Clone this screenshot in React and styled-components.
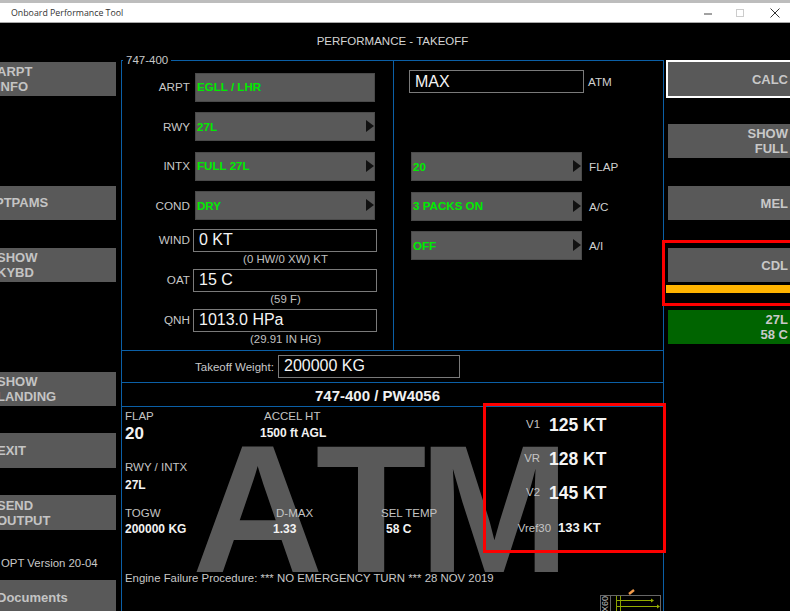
import React from "react";
import styled, { createGlobalStyle } from "styled-components";

const Global = createGlobalStyle`
  html, body { margin: 0; padding: 0; background: #000; }
  #root { width: 790px; height: 611px; overflow: hidden; }
  * { box-sizing: border-box; }
`;

const Page = styled.div`
  width: 790px; height: 611px; overflow: hidden; background: #000;
  display: flex; flex-direction: column;
  font-family: "Liberation Sans", Arial, sans-serif; color: #cfcfcf;
`;
const TitleBar = styled.div`
  height: 23px; flex: none; background: #fff;
  border-top: 3px solid #bdbdbd; border-bottom: 1px solid #a8a8a8;
  display: flex; align-items: center; justify-content: space-between;
  padding-left: 11px;
  font-family: "Open Sans", sans-serif; font-size: 8.8px; color: #333;
`;
const WinControls = styled.div`
  display: flex; align-items: center; gap: 22px; padding-right: 10px;
`;
const Body = styled.div`
  flex: 1; min-height: 0; display: flex; flex-direction: column; overflow: hidden;
`;
const Heading = styled.div`
  height: 37px; flex: none; text-align: center; font-size: 11.5px; color: #d4d4d4;
  padding: 11px 5px 0 0; line-height: 14px;
`;
const Columns = styled.div`
  flex: 1; min-height: 0; display: flex; align-items: stretch;
`;
const LeftCol = styled.div`
  width: 116px; flex: none; margin-right: 5px; display: flex; flex-direction: column;
`;
const SideBtn = styled.div`
  flex: none; height: ${p => p.$h || 34}px; margin-top: ${p => p.$mt || 0}px;
  background: #595959; color: #c4c4c4; font-weight: bold; font-size: 13px; line-height: 15px;
  display: flex; flex-direction: column; justify-content: center; white-space: nowrap;
  text-indent: ${p => p.$indent ?? -3}px; padding-bottom: ${p => p.$pb ?? 1}px;
`;
const Version = styled.div`
  margin-top: 26px; padding-left: 1px; font-size: 11.4px; line-height: 14px; color: #c8c8c8; white-space: nowrap; height: 14px;
`;
const Panel = styled.div`
  width: 543px; flex: none; height: 560px; position: relative;
  border: 1px solid #0b5fa6; border-bottom: none;
  display: flex; flex-direction: column;
`;
const Legend = styled.div`
  position: absolute; left: 1px; top: -8px; background: #000; padding: 0 3px;
  font-size: 11.5px; line-height: 14px; color: #c8c8c8;
`;
const Setup = styled.div`
  height: 290px; flex: none; display: flex; border-bottom: 1px solid #0b5fa6;
`;
const SetupLeft = styled.div`
  width: 272px; flex: none; border-right: 1px solid #0b5fa6; padding-top: 12px;
  display: flex; flex-direction: column; gap: 11.5px;
`;
const SetupRight = styled.div`
  flex: 1; padding-top: 9px; display: flex; flex-direction: column;
`;
const Row = styled.div`
  display: flex; align-items: center; height: ${p => p.$h || 28}px; flex: none;
`;
const FieldGroup = styled.div`
  flex: none; height: 40px; margin-top: ${p => p.$mt || 0}px;
`;
const RowLabel = styled.div`
  width: 68px; flex: none; text-align: right; font-size: 11.7px; color: #c8c8c8; line-height: 14px;
`;
const Select = styled.div`
  width: ${p => p.$w || 180}px; height: 29px; flex: none; background: #595959;
  border: 1px solid #4a4a4a; margin-left: ${p => p.$ml ?? 5}px;
  display: flex; align-items: center; justify-content: space-between; padding: 0 0 1px 1px;
  color: #00ec00; font-weight: bold; font-size: 11.6px;
`;
const Arrow = styled.span`
  width: 0; height: 0; border-left: 8px solid #111; border-top: 6px solid transparent;
  border-bottom: 6px solid transparent;
`;
const Input = styled.div`
  width: ${p => p.$w || 184}px; height: 23px; flex: none; background: #000;
  border: 1px solid #7a7a7a; margin-left: ${p => p.$ml ?? 3}px;
  color: #f4f4f4; font-size: 16px; line-height: ${p => p.$lh || 20}px; padding-left: 5px;
`;
const Note = styled.div`
  padding-left: 71px; width: 256px; text-align: center; font-size: 11.4px; line-height: 13px;
  color: #c0c0c0; margin-top: 1px;
`;
const RightLabel = styled.div`
  margin-left: ${p => p.$ml ?? 7}px; font-size: 11.7px; color: #cfcfcf;
`;
const InputLine = styled.div`
  display: flex; align-items: center; height: 23px; flex: none; margin: 0 0 59px 15px;
`;
const SelectLine = styled.div`
  display: flex; align-items: center; height: 29px; flex: none; margin: 0 0 10.5px 17px;
`;
const WeightRow = styled.div`
  height: 32px; flex: none; border-bottom: 1px solid #0b5fa6;
  display: flex; align-items: center; padding-left: 73px;
`;
const WeightLabel = styled.div` font-size: 11.5px; color: #c8c8c8; width: 83px; `;
const ModelBar = styled.div`
  height: 24px; flex: none; border-bottom: 1px solid #0b5fa6;
  text-align: center; font-size: 15px; font-weight: bold; color: #f0f0f0; line-height: 25px;
  padding-right: 30px; position: relative; z-index: 1;
`;
const Results = styled.div`
  flex: 1; position: relative; padding: 2px 0 0 3px; overflow: hidden;
`;
const Watermark = styled.div`
  position: absolute; left: 70px; top: -3px; font-size: 182px; line-height: 210px;
  font-weight: bold; color: #595959; letter-spacing: -8px; white-space: nowrap; font-kerning: none;
`;
const ResultRow = styled.div`
  position: relative; display: grid; grid-template-columns: 135px 121px 100px;
  height: ${p => p.$h}px;
`;
const Cell = styled.div`
  padding-left: ${p => p.$pl || 0}px;
`;
const CellLabel = styled.div` font-size: 11.5px; line-height: 14px; color: #c4c4c4; white-space: nowrap; `;
const CellValue = styled.div`
  font-size: ${p => p.$size || 12}px; font-weight: bold; color: #f2f2f2; line-height: ${p => p.$lh || 14}px;
  margin-top: ${p => p.$mt || 0}px; margin-left: ${p => p.$ml || 0}px; white-space: nowrap;
`;
const Procedure = styled.div`
  position: relative; font-size: 11.4px; line-height: 14px; color: #c8c8c8; white-space: nowrap;
`;
const Callout = styled.div`
  position: absolute; left: 361px; top: 342px; width: 183px; height: 150px;
  border: 3px solid #fe0000; z-index: 2;
`;
const Speed = styled.div`
  display: grid; grid-template-columns: ${p => p.$small ? "65px 1fr" : "54px 1fr"}; align-items: center;
  column-gap: ${p => p.$small ? 7 : 9}px; height: 33.7px; margin-top: ${p => p.$mt || 0}px;
`;
const SpeedList = styled.div`
  padding-top: 3px;
`;
const SpeedLabel = styled.div`
  text-align: right; font-size: 11.4px; color: #c4c4c4; margin-top: ${p => p.$small ? 0 : -3}px;
`;
const SpeedValue = styled.div`
  font-size: ${p => p.$small ? 13 : 17.5}px; font-weight: bold; color: #f4f4f4; white-space: nowrap;
`;
const Chart = styled.svg`
  position: absolute; left: 470px; top: 178px;
`;
const RightCol = styled.div`
  flex: 1; min-width: 0; display: flex; flex-direction: column; padding-left: 4px; margin-right: -20px;
`;
const RightBtn = styled.div`
  flex: none; height: ${p => p.$h || 34}px; margin-top: ${p => p.$mt || 0}px;
  margin-left: ${p => p.$outline ? -2 : 0}px;
  background: ${p => p.$bg || "#595959"}; color: #c8c8c8; font-weight: bold; font-size: 13px; line-height: 15px;
  display: flex; flex-direction: column; justify-content: center; align-items: flex-end;
  padding-right: ${p => p.$outline ? 20 : 22}px; border: ${p => p.$outline ? "2px solid #fff" : "none"};
`;
const CdlGroup = styled.div`
  position: relative; margin-top: 28px; flex: none;
`;
const CdlBox = styled.div`
  position: absolute; left: -6px; right: -3px; top: -8px; height: 66px;
  border: 3px solid #fe0000; pointer-events: none;
`;
const Amber = styled.div`
  height: 8px; margin: 3px 0 0 -2px; background: #ffb400;
`;
const CloseIcon = styled.svg` margin-left: 3px; `;

function Win() {
  return (
    <WinControls>
      <svg width="10" height="10" viewBox="0 0 10 10"><path d="M1 6h8" stroke="#444" strokeWidth="1" /></svg>
      <svg width="10" height="10" viewBox="0 0 10 10"><rect x="1.5" y="1.5" width="7" height="7" fill="none" stroke="#ccc" /></svg>
      <CloseIcon width="10" height="10" viewBox="0 0 10 10"><path d="M.5.5l9 9M9.5.5l-9 9" stroke="#333" strokeWidth="1" /></CloseIcon>
    </WinControls>
  );
}

export default function App() {
  return (
    <Page>
      <Global />
      <TitleBar>Onboard Performance Tool<Win /></TitleBar>
      <Body>
        <Heading>PERFORMANCE - TAKEOFF</Heading>
        <Columns>
          <LeftCol>
            <SideBtn $mt={2}><span>ARPT</span><span>INFO</span></SideBtn>
            <SideBtn $mt={90} $indent={-5}>PTPAMS</SideBtn>
            <SideBtn $mt={28}><span>SHOW</span><span>KYBD</span></SideBtn>
            <SideBtn $mt={90}><span>SHOW</span><span>LANDING</span></SideBtn>
            <SideBtn $mt={27} $h={35} $pb={0}>EXIT</SideBtn>
            <SideBtn $mt={27} $h={35} $pb={0}><span>SEND</span><span>OUTPUT</span></SideBtn>
            <Version>OPT Version 20-04</Version>
            <SideBtn $mt={10} $pb={0}>Documents</SideBtn>
          </LeftCol>
          <Panel>
            <Legend>747-400</Legend>
            <Setup>
              <SetupLeft>
                <Row><RowLabel>ARPT</RowLabel><Select>EGLL / LHR</Select></Row>
                <Row><RowLabel>RWY</RowLabel><Select>27L<Arrow /></Select></Row>
                <Row><RowLabel>INTX</RowLabel><Select>FULL 27L<Arrow /></Select></Row>
                <Row><RowLabel>COND</RowLabel><Select>DRY<Arrow /></Select></Row>
                <FieldGroup $mt={-2.5}>
                  <Row $h={23}><RowLabel>WIND</RowLabel><Input>0 KT</Input></Row>
                  <Note>(0 HW/0 XW) KT</Note>
                </FieldGroup>
                <FieldGroup $mt={-11.5}>
                  <Row $h={23}><RowLabel>OAT</RowLabel><Input>15 C</Input></Row>
                  <Note>(59 F)</Note>
                </FieldGroup>
                <FieldGroup $mt={-11.5}>
                  <Row $h={23}><RowLabel>QNH</RowLabel><Input>1013.0 HPa</Input></Row>
                  <Note>(29.91 IN HG)</Note>
                </FieldGroup>
              </SetupLeft>
              <SetupRight>
                <InputLine><Input $w={175} $ml={0} $lh={21}>MAX</Input><RightLabel $ml={4}>ATM</RightLabel></InputLine>
                <SelectLine><Select $w={171} $ml={0}>20<Arrow /></Select><RightLabel>FLAP</RightLabel></SelectLine>
                <SelectLine><Select $w={171} $ml={0}>3 PACKS ON<Arrow /></Select><RightLabel>A/C</RightLabel></SelectLine>
                <SelectLine><Select $w={171} $ml={0}>OFF<Arrow /></Select><RightLabel>A/I</RightLabel></SelectLine>
              </SetupRight>
            </Setup>
            <WeightRow>
              <WeightLabel>Takeoff Weight:</WeightLabel>
              <Input $w={182} $ml={0}>200000 KG</Input>
            </WeightRow>
            <ModelBar>747-400 / PW4056</ModelBar>
            <Results>
              <Watermark>ATM</Watermark>
              <ResultRow $h={51}>
                <Cell><CellLabel>FLAP</CellLabel><CellValue $size={17} $lh={20} $mt={1}>20</CellValue></Cell>
                <Cell $pl={4}><CellLabel>ACCEL HT</CellLabel><CellValue $mt={3} $ml={-4}>1500 ft AGL</CellValue></Cell>
              </ResultRow>
              <ResultRow $h={46}>
                <Cell><CellLabel>RWY / INTX</CellLabel><CellValue $mt={4}>27L</CellValue></Cell>
              </ResultRow>
              <ResultRow $h={65}>
                <Cell><CellLabel>TOGW</CellLabel><CellValue $mt={2}>200000 KG</CellValue></Cell>
                <Cell $pl={16}><CellLabel>D-MAX</CellLabel><CellValue $mt={2} $ml={-3}>1.33</CellValue></Cell>
                <Cell><CellLabel>SEL TEMP</CellLabel><CellValue $mt={2} $ml={5}>58 C</CellValue></Cell>
              </ResultRow>
              <Procedure>Engine Failure Procedure: *** NO EMERGENCY TURN *** 28 NOV 2019</Procedure>
              <Chart width="70" height="30" viewBox="0 0 70 30">
                <path d="M37 9l5-4" stroke="#f29a4a" strokeWidth="2.4" />
                <rect x="8.5" y="10.5" width="60" height="20" fill="none" stroke="#666" />
                <path d="M18.5 11v20" stroke="#666" />
                <path d="M24.5 11v20M28.5 11v20" stroke="#8aa000" />
                <path d="M25 15.5h35M25 21.5h41" stroke="#95ad00" strokeWidth="1.2" />
                <path d="M59 13.5v4l3-2zM65 19.5v4l3-2z" fill="#95ad00" />
                <text transform="translate(16 27) rotate(-90)" fontSize="9" fontFamily="Liberation Sans" fill="#bbb">X60</text>
              </Chart>
            </Results>
            <Callout>
              <SpeedList>
                <Speed><SpeedLabel>V1</SpeedLabel><SpeedValue>125 KT</SpeedValue></Speed>
                <Speed><SpeedLabel>VR</SpeedLabel><SpeedValue>128 KT</SpeedValue></Speed>
                <Speed><SpeedLabel>V2</SpeedLabel><SpeedValue>145 KT</SpeedValue></Speed>
                <Speed $small $mt={1}><SpeedLabel $small>Vref30</SpeedLabel><SpeedValue $small>133 KT</SpeedValue></Speed>
              </SpeedList>
            </Callout>
          </Panel>
          <RightCol>
            <RightBtn $h={38} $outline>CALC</RightBtn>
            <RightBtn $mt={26}><span>SHOW</span><span>FULL</span></RightBtn>
            <RightBtn $mt={28}>MEL</RightBtn>
            <CdlGroup>
              <RightBtn>CDL</RightBtn>
              <Amber />
              <CdlBox />
            </CdlGroup>
            <RightBtn $mt={17} $bg="#006400"><span>27L</span><span>58 C</span></RightBtn>
          </RightCol>
        </Columns>
      </Body>
    </Page>
  );
}
